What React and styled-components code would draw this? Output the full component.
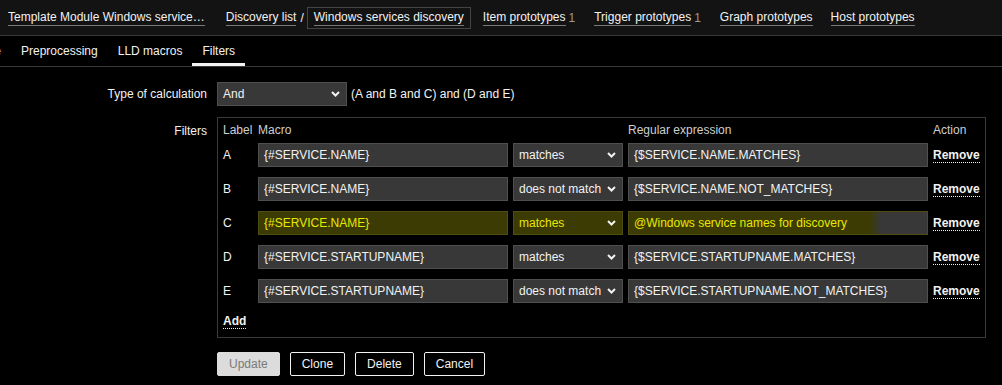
import React from "react";
import styled, { createGlobalStyle, css } from "styled-components";

const Global = createGlobalStyle`
  html, body { margin: 0; padding: 0; background: #000; }
  body { font-family: "Liberation Sans", Arial, sans-serif; font-size: 12px; color: #f2f2f2; }
  * { box-sizing: border-box; }
`;

const Page = styled.div`
  width: 1002px;
  height: 385px;
  overflow: hidden;
  background: #000;
`;

const TopBar = styled.div`
  height: 36px;
  background: #131313;
  border-bottom: 1px solid #383838;
  display: flex;
  align-items: center;
  white-space: nowrap;
  overflow: hidden;
`;

const Clip = styled.div`
  width: ${(p) => p.$w}px;
  flex: none;
  overflow: hidden;
  display: flex;
  justify-content: flex-end;
  white-space: nowrap;
`;

const Crumb = styled.span`
  color: #f2f2f2;
  border-bottom: 1px solid #777;
  line-height: 14px;
  padding-bottom: 1px;
  margin-left: ${(p) => p.$ml || 0}px;
`;

const Sep = styled.span`
  color: #f2f2f2;
  margin: 0 3px 0 4px;
`;

const CurrentBox = styled.span`
  border: 1px solid #444;
  height: 22px;
  padding: 0 6px;
  display: inline-flex;
  align-items: center;
`;

const Count = styled.span`
  color: #9a9a9a;
  margin-left: 3px;
`;

const TabsRow = styled.div`
  height: 31px;
  border-bottom: 1px solid #383838;
  display: flex;
  align-items: stretch;
  white-space: nowrap;
`;

const Tab = styled.div`
  padding: 0 10px;
  display: flex;
  align-items: center;
  color: #f2f2f2;
  flex: none;
  ${(p) =>
    p.$active &&
    css`
      box-shadow: inset 0 -3px 0 #f2f2f2;
    `}
`;

const Form = styled.div`
  padding-top: 15px;
  display: grid;
  grid-template-columns: 207px auto;
  column-gap: 10px;
  row-gap: 11px;
  align-items: start;
`;

const FieldLabel = styled.div`
  text-align: right;
  color: #f2f2f2;
  line-height: ${(p) => p.$lh || 24}px;
  padding-top: ${(p) => p.$pt || 0}px;
`;

const Inline = styled.div`
  display: flex;
  align-items: center;
  gap: 4px;
`;

const SelectBox = styled.div`
  width: ${(p) => p.$w}px;
  height: 24px;
  background: ${(p) => (p.$hl ? "#3b3b03" : "#383838")};
  border: 1px solid ${(p) => (p.$hl ? "#4e4e10" : "#4f4f4f")};
  color: ${(p) => (p.$hl ? "#e8e800" : "#f2f2f2")};
  display: flex;
  align-items: center;
  justify-content: space-between;
  padding: 0 6px 0 5px;
  flex: none;
`;

const Chevron = () => (
  <svg width="9" height="6" viewBox="0 0 9 6">
    <path d="M1 1 L4.5 4.5 L8 1" fill="none" stroke="#f2f2f2" strokeWidth="2" />
  </svg>
);

const Hint = styled.span`
  color: #f2f2f2;
`;

const FilterBox = styled.div`
  width: 769px;
  border: 1px solid #3a3a3a;
  padding: 5px 5px 8px 5px;
`;

const Row = styled.div`
  display: grid;
  grid-template-columns: 30px 250px 110px 300px auto;
  column-gap: 5px;
  align-items: center;
  height: ${(p) => (p.$head ? 14 : 24)}px;
  margin-bottom: ${(p) => (p.$head ? 6 : 10)}px;
`;

const HeadCell = styled.div`
  color: #cfcfcf;
`;

const LetterCell = styled.div`
  color: #f2f2f2;
`;

const TextInput = styled.div`
  height: 24px;
  border: 1px solid ${(p) => (p.$hl ? "#4e4e10" : "#4f4f4f")};
  background: ${(p) =>
    p.$hl === "full"
      ? "#3b3b03"
      : p.$hl === "part"
      ? "linear-gradient(90deg, #3b3b03 0, #3b3b03 240px, #383838 252px)"
      : "#383838"};
  color: ${(p) => (p.$hl ? "#e8e800" : "#f2f2f2")};
  display: flex;
  align-items: center;
  padding: 0 5px;
  white-space: nowrap;
  overflow: hidden;
`;

const ActionLink = styled.span`
  font-weight: bold;
  color: #f2f2f2;
  border-bottom: 1px dotted #f2f2f2;
  line-height: 14px;
  justify-self: start;
`;

const AddRow = styled.div`
  height: 16px;
  display: flex;
  align-items: center;
`;

const Buttons = styled.div`
  grid-column: 2;
  display: flex;
  gap: 10px;
  margin-top: 3px;
`;

const Button = styled.button`
  font-family: "Liberation Sans", Arial, sans-serif;
  font-size: 12px;
  height: 24px;
  padding: 0 11px;
  background: ${(p) => (p.$disabled ? "#dcdcdc" : "#000")};
  color: ${(p) => (p.$disabled ? "#7a7a7a" : "#f2f2f2")};
  border: 1px solid ${(p) => (p.$disabled ? "#dcdcdc" : "#f2f2f2")};
  border-radius: 2px;
`;

const filters = [
  { l: "A", m: "{#SERVICE.NAME}", op: "matches", re: "{$SERVICE.NAME.MATCHES}" },
  { l: "B", m: "{#SERVICE.NAME}", op: "does not match", re: "{$SERVICE.NAME.NOT_MATCHES}" },
  { l: "C", m: "{#SERVICE.NAME}", op: "matches", re: "@Windows service names for discovery", hl: true },
  { l: "D", m: "{#SERVICE.STARTUPNAME}", op: "matches", re: "{$SERVICE.STARTUPNAME.MATCHES}" },
  { l: "E", m: "{#SERVICE.STARTUPNAME}", op: "does not match", re: "{$SERVICE.STARTUPNAME.NOT_MATCHES}" },
];

export default function App() {
  return (
    <Page>
      <Global />
      <TopBar>
        <Clip $w={2}>
          <Sep>/</Sep>
        </Clip>
        <Crumb $ml={6}>Template Module Windows service…</Crumb>
        <Crumb $ml={21}>Discovery list</Crumb>
        <Sep>/</Sep>
        <CurrentBox>
          <Crumb>Windows services discovery</Crumb>
        </CurrentBox>
        <Crumb $ml={12}>Item prototypes</Crumb>
        <Count>1</Count>
        <Crumb $ml={19}>Trigger prototypes</Crumb>
        <Count>1</Count>
        <Crumb $ml={19}>Graph prototypes</Crumb>
        <Crumb $ml={18}>Host prototypes</Crumb>
      </TopBar>
      <TabsRow>
        <Clip $w={11}>
          <Tab>Discovery rule</Tab>
        </Clip>
        <Tab>Preprocessing</Tab>
        <Tab>LLD macros</Tab>
        <Tab $active>Filters</Tab>
      </TabsRow>
      <Form>
        <FieldLabel>Type of calculation</FieldLabel>
        <Inline>
          <SelectBox $w={130}>
            <span>And</span>
            <Chevron />
          </SelectBox>
          <Hint>(A and B and C) and (D and E)</Hint>
        </Inline>
        <FieldLabel $lh={14} $pt={7}>
          Filters
        </FieldLabel>
        <FilterBox>
          <Row $head>
            <HeadCell>Label</HeadCell>
            <HeadCell>Macro</HeadCell>
            <HeadCell />
            <HeadCell>Regular expression</HeadCell>
            <HeadCell>Action</HeadCell>
          </Row>
          {filters.map((f) => (
            <Row key={f.l}>
              <LetterCell>{f.l}</LetterCell>
              <TextInput $hl={f.hl ? "full" : undefined}>{f.m}</TextInput>
              <SelectBox $w={110} $hl={f.hl}>
                <span>{f.op}</span>
                <Chevron />
              </SelectBox>
              <TextInput $hl={f.hl ? "part" : undefined}>{f.re}</TextInput>
              <ActionLink>Remove</ActionLink>
            </Row>
          ))}
          <AddRow>
            <ActionLink>Add</ActionLink>
          </AddRow>
        </FilterBox>
        <Buttons>
          <Button $disabled>Update</Button>
          <Button>Clone</Button>
          <Button>Delete</Button>
          <Button>Cancel</Button>
        </Buttons>
      </Form>
    </Page>
  );
}
